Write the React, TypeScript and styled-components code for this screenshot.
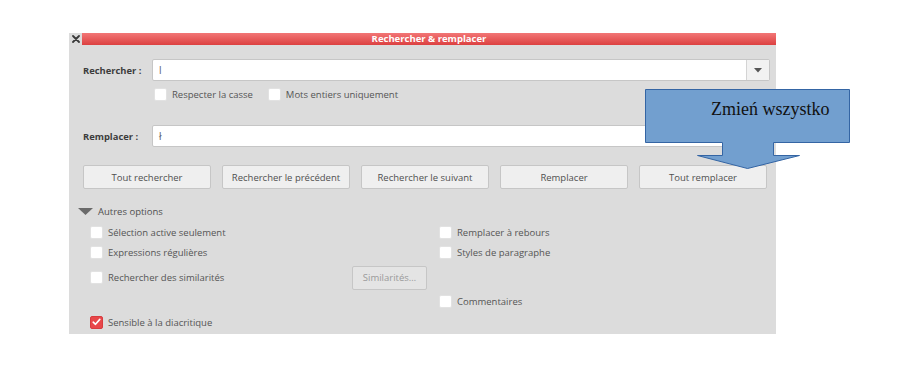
import React from "react";
import styled, { createGlobalStyle } from "styled-components";

const GlobalStyle = createGlobalStyle`
  html, body { margin: 0; padding: 0; background: #ffffff; }
  body { font-family: "Open Sans", "Noto Sans", sans-serif; }
`;

const Page = styled.div`
  width: 906px;
  height: 382px;
  box-sizing: border-box;
  padding: 33px 0 0 69px;
`;

const Dialog = styled.div`
  position: relative;
  width: 707px;
  height: 301px;
  background: #dcdcdc;
  display: flex;
  flex-direction: column;
`;

const TitleBar = styled.div`
  display: flex;
  height: 12px;
`;

const CloseBox = styled.div`
  width: 13px;
  display: flex;
  align-items: center;
  justify-content: center;
  background: #dcdcdc;
`;

const TitleStrip = styled.div`
  flex: 1;
  display: flex;
  align-items: center;
  justify-content: center;
  background: linear-gradient(#f27676, #dc4040);
  color: #ffffff;
  font-weight: 700;
  font-size: 9.5px;
  line-height: 12px;
`;

const Content = styled.div`
  display: flex;
  flex-direction: column;
  padding: 14px 6px 0 14px;
`;

const FieldRow = styled.div<{ $top?: number }>`
  display: grid;
  grid-template-columns: 69px 1fr;
  align-items: center;
  height: 22px;
  margin-top: ${(p) => p.$top ?? 0}px;
`;

const FieldLabel = styled.div`
  font-weight: 700;
  font-size: 9.4px;
  color: #3c3c3c;
`;

const TextBox = styled.div`
  height: 22px;
  box-sizing: border-box;
  display: flex;
  align-items: stretch;
  background: #ffffff;
  border: 1px solid #c6c6c6;
  border-radius: 2px;
`;

const TextValue = styled.div`
  flex: 1;
  display: flex;
  align-items: center;
  padding-left: 6px;
  font-size: 10px;
  color: #58606a;
`;

const ComboButton = styled.div`
  width: 22px;
  display: flex;
  align-items: center;
  justify-content: center;
  background: #f2f2f2;
  border-left: 1px solid #d4d4d4;
`;

const CheckRow = styled.div`
  display: flex;
  align-items: center;
  gap: 15px;
  margin: 7px 0 0 71px;
  height: 13px;
`;

const Check = styled.label`
  display: flex;
  align-items: center;
  gap: 5px;
  font-size: 9.5px;
  color: #555555;
  white-space: nowrap;
`;

const Box = styled.span<{ $checked?: boolean }>`
  width: 13px;
  height: 13px;
  box-sizing: border-box;
  border-radius: 2px;
  display: inline-flex;
  align-items: center;
  justify-content: center;
  background: ${(p) => (p.$checked ? "#e8474a" : "#ffffff")};
  border: 1px solid ${(p) => (p.$checked ? "#d83c3f" : "#e2e2e2")};
  flex: none;
`;

const ButtonRow = styled.div`
  display: grid;
  grid-template-columns: repeat(5, 128px);
  gap: 11px;
  margin-top: 18px;
`;

const PushButton = styled.button<{ $disabled?: boolean }>`
  height: 24px;
  box-sizing: border-box;
  padding: 0;
  font-family: "Open Sans", "Noto Sans", sans-serif;
  font-size: 9.5px;
  color: ${(p) => (p.$disabled ? "#9a9a9a" : "#505050")};
  background: ${(p) => (p.$disabled ? "#e4e4e4" : "#efefef")};
  border: 1px solid #c6c6c6;
  border-radius: 2px;
`;

const Expander = styled.div`
  display: flex;
  align-items: center;
  gap: 5px;
  height: 14px;
  margin: 15px 0 0 -5px;
  font-size: 9.5px;
  color: #505050;
`;

const OptionsGrid = styled.div`
  display: grid;
  grid-template-columns: 262px 87px 1fr;
  grid-template-rows: 20px 21px 28px 20px 22px;
  align-items: center;
  margin: 4px 0 0 7px;
`;

const Cell = styled.div<{ $col: number; $row: number }>`
  grid-column: ${(p) => p.$col};
  grid-row: ${(p) => p.$row};
`;

const SimilarButton = styled(PushButton)`
  width: 75px;
`;

const Callout = styled.div`
  position: absolute;
  left: 576px;
  top: 56px;
  width: 206px;
  height: 81px;
`;

const CalloutShape = styled.svg`
  position: absolute;
  left: 0;
  top: 0;
`;

const CalloutText = styled.div`
  position: relative;
  padding: 10px 0 0 66px;
  font-family: "Liberation Serif", "Times New Roman", serif;
  font-size: 18px;
  line-height: normal;
  color: #111111;
  white-space: nowrap;
`;

const CheckOption: React.FC<{ label: string; checked?: boolean }> = ({ label, checked }) => (
  <Check>
    <Box $checked={checked}>
      {checked && (
        <svg width="9" height="8" viewBox="0 0 9 8">
          <path d="M1.2 4.2 L3.5 6.3 L7.8 1.4" fill="none" stroke="#ffffff" strokeWidth="1.6" strokeLinecap="round" strokeLinejoin="round" />
        </svg>
      )}
    </Box>
    {label}
  </Check>
);

export default function App() {
  return (
    <>
      <GlobalStyle />
      <Page>
        <Dialog>
          <TitleBar>
            <CloseBox>
              <svg width="8" height="8" viewBox="0 0 8 8">
                <path d="M1 1 L7 7 M7 1 L1 7" stroke="#3a3a3a" strokeWidth="1.8" strokeLinecap="round" />
              </svg>
            </CloseBox>
            <TitleStrip>Rechercher &amp; remplacer</TitleStrip>
          </TitleBar>
          <Content>
            <FieldRow>
              <FieldLabel>Rechercher :</FieldLabel>
              <TextBox>
                <TextValue>l</TextValue>
                <ComboButton>
                  <svg width="8" height="5" viewBox="0 0 8 5">
                    <path d="M0 0 H8 L4 4.5 Z" fill="#555555" />
                  </svg>
                </ComboButton>
              </TextBox>
            </FieldRow>
            <CheckRow>
              <CheckOption label="Respecter la casse" />
              <CheckOption label="Mots entiers uniquement" />
            </CheckRow>
            <FieldRow $top={24}>
              <FieldLabel>Remplacer :</FieldLabel>
              <TextBox>
                <TextValue>ł</TextValue>
              </TextBox>
            </FieldRow>
            <ButtonRow>
              <PushButton>Tout rechercher</PushButton>
              <PushButton>Rechercher le précédent</PushButton>
              <PushButton>Rechercher le suivant</PushButton>
              <PushButton>Remplacer</PushButton>
              <PushButton>Tout remplacer</PushButton>
            </ButtonRow>
            <Expander>
              <svg width="15" height="7" viewBox="0 0 15 7">
                <path d="M0 0 H15 L7.5 7 Z" fill="#6a6a6a" />
              </svg>
              Autres options
            </Expander>
            <OptionsGrid>
              <Cell $col={1} $row={1}><CheckOption label="Sélection active seulement" /></Cell>
              <Cell $col={3} $row={1}><CheckOption label="Remplacer à rebours" /></Cell>
              <Cell $col={1} $row={2}><CheckOption label="Expressions régulières" /></Cell>
              <Cell $col={3} $row={2}><CheckOption label="Styles de paragraphe" /></Cell>
              <Cell $col={1} $row={3}><CheckOption label="Rechercher des similarités" /></Cell>
              <Cell $col={2} $row={3}><SimilarButton $disabled>Similarités…</SimilarButton></Cell>
              <Cell $col={3} $row={4}><CheckOption label="Commentaires" /></Cell>
              <Cell $col={1} $row={5}><CheckOption label="Sensible à la diacritique" checked /></Cell>
            </OptionsGrid>
          </Content>
          <Callout>
            <CalloutShape width="206" height="81" viewBox="0 0 206 81">
              <path
                d="M0.5 0.5 H204.5 V53.5 H128.5 V66.5 H154.5 L102.5 79.5 L52.5 66.5 H77.5 V53.5 H0.5 Z"
                fill="#729fcf"
                stroke="#3465a4"
                strokeWidth="1"
              />
            </CalloutShape>
            <CalloutText>Zmień wszystko</CalloutText>
          </Callout>
        </Dialog>
      </Page>
    </>
  );
}
